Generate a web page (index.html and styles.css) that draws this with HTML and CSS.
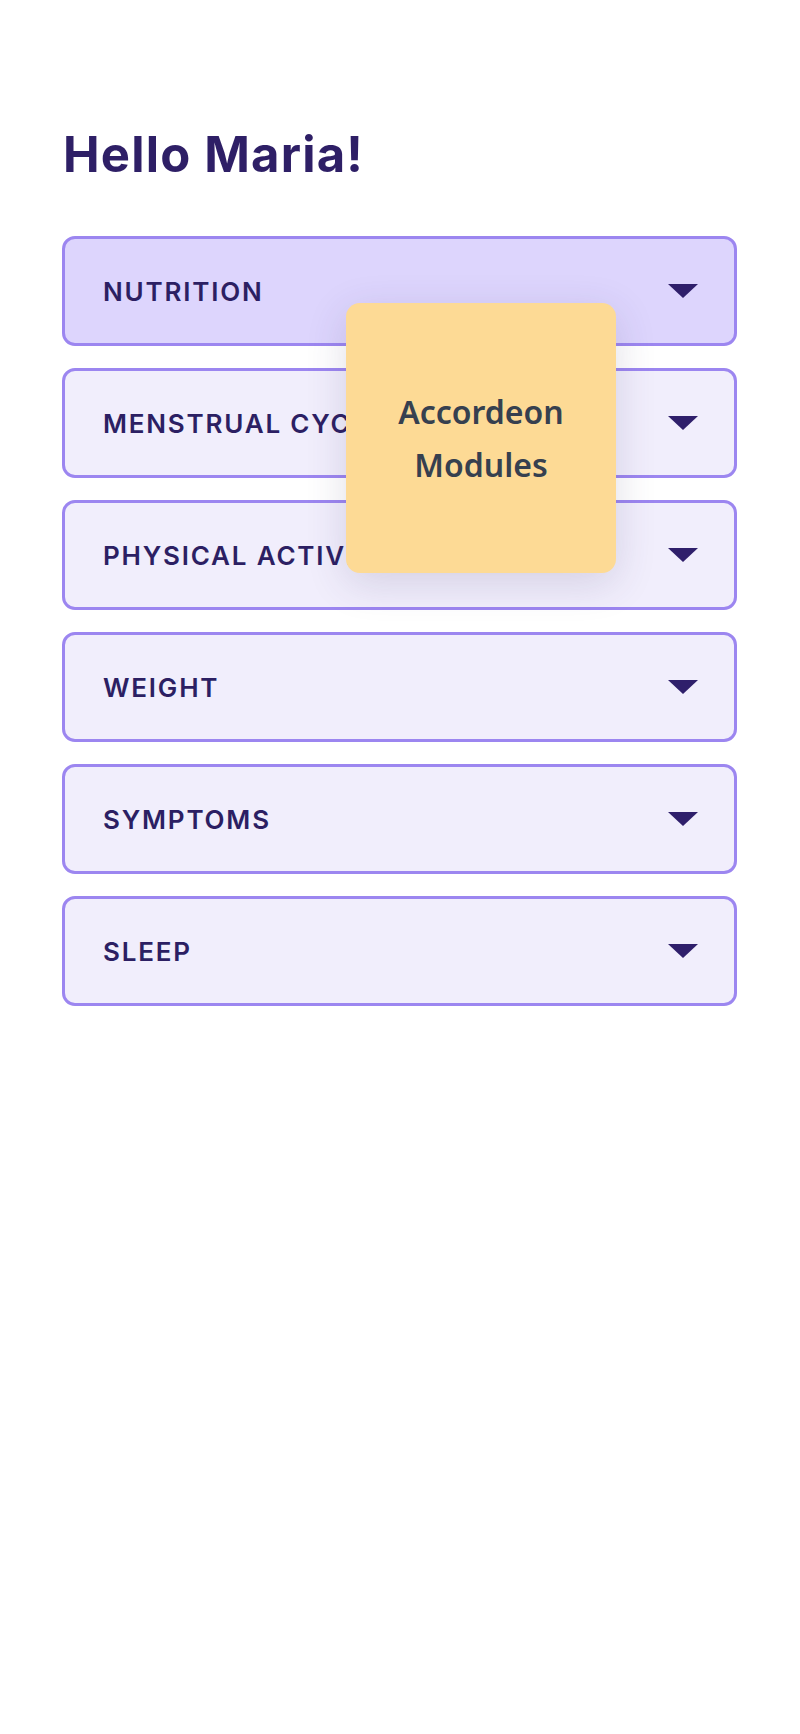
FILE: index.html
```html
<!DOCTYPE html>
<html lang="en">
<head>
    <meta charset="UTF-8">
    <meta name="viewport" content="width=device-width, initial-scale=1.0">
    <title>Hello Maria</title>
    <link rel="stylesheet" href="styles.css">
</head>
<body>
    <div class="page">
        <h1>Hello Maria!</h1>
        <div class="accordion">
            <div class="item active">
                <span class="label">NUTRITION</span>
                <svg class="arrow" width="30" height="14" viewBox="0 0 30 14"><polygon points="0,0 30,0 15,14"/></svg>
            </div>
            <div class="item">
                <span class="label">MENSTRUAL CYCLE</span>
                <svg class="arrow" width="30" height="14" viewBox="0 0 30 14"><polygon points="0,0 30,0 15,14"/></svg>
            </div>
            <div class="item">
                <span class="label">PHYSICAL ACTIVITY</span>
                <svg class="arrow" width="30" height="14" viewBox="0 0 30 14"><polygon points="0,0 30,0 15,14"/></svg>
            </div>
            <div class="item">
                <span class="label">WEIGHT</span>
                <svg class="arrow" width="30" height="14" viewBox="0 0 30 14"><polygon points="0,0 30,0 15,14"/></svg>
            </div>
            <div class="item">
                <span class="label">SYMPTOMS</span>
                <svg class="arrow" width="30" height="14" viewBox="0 0 30 14"><polygon points="0,0 30,0 15,14"/></svg>
            </div>
            <div class="item">
                <span class="label">SLEEP</span>
                <svg class="arrow" width="30" height="14" viewBox="0 0 30 14"><polygon points="0,0 30,0 15,14"/></svg>
            </div>
        </div>
        <div class="note">Accordeon<br>Modules</div>
    </div>
</body>
</html>
```

FILE: styles.css
```css
body {
    margin: 0;
    background-color: #ffffff;
    font-family: Inter, "Noto Sans", sans-serif;
    color: #2c1f63;
}
.page {
    position: relative;
    padding: 125px 63px 0 62px;
    min-height: 1734px;
    box-sizing: border-box;
}
h1 {
    margin: 0 0 51px 1px;
    font-size: 49px;
    line-height: 60px;
    font-weight: 700;
    letter-spacing: 1.2px;
    color: #2e1f66;
}
.accordion {
    display: flex;
    flex-direction: column;
    gap: 22px;
}
.item {
    height: 110px;
    box-sizing: border-box;
    display: flex;
    align-items: center;
    justify-content: space-between;
    padding: 0 36px 0 38px;
    background-color: #f1eefc;
    border: 3px solid #9c86f0;
    border-radius: 13px;
}
.item.active {
    background-color: #ddd5fd;
}
.label {
    font-size: 26px;
    font-weight: 600;
    letter-spacing: 1.8px;
    color: #2c1f63;
}
.arrow {
    fill: #2f1f6b;
}
.note {
    position: absolute;
    left: 346px;
    top: 303px;
    width: 270px;
    height: 270px;
    display: flex;
    align-items: center;
    justify-content: center;
    text-align: center;
    background-color: #fdda95;
    border-radius: 14px;
    box-shadow: 0 10px 40px rgba(60, 50, 100, 0.16);
    font-family: "Noto Sans", sans-serif;
    font-size: 32px;
    line-height: 53px;
    font-weight: 600;
    color: #36404f;
}
```
